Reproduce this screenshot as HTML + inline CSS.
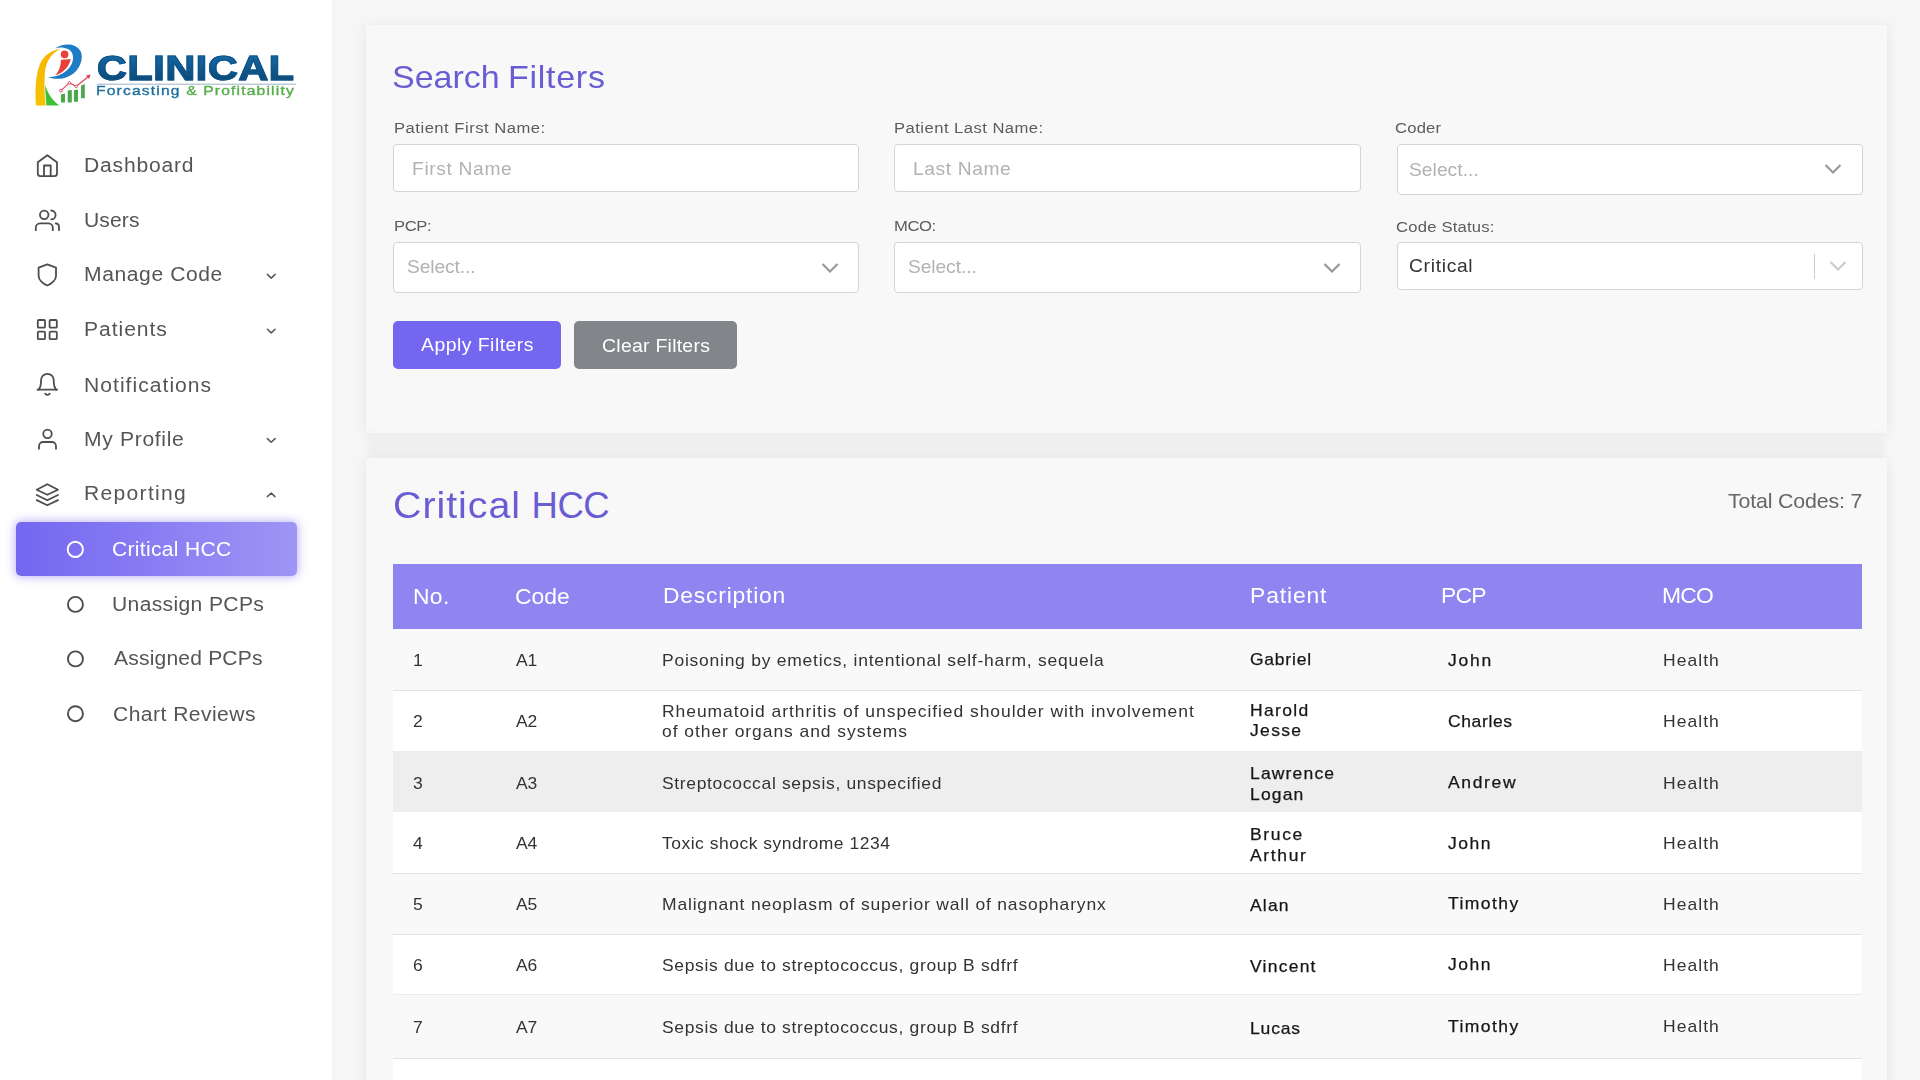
<!DOCTYPE html>
<html><head><meta charset="utf-8">
<style>
*{box-sizing:border-box;margin:0;padding:0}
html,body{width:1920px;height:1080px;overflow:hidden;background:#f6f6f6;font-family:"Liberation Sans",sans-serif}
.abs{position:absolute}
.t{position:absolute;white-space:nowrap;line-height:1.15}
#side{position:absolute;left:0;top:0;width:332px;height:1080px;background:#fff}
.nt{color:#555}
.ic{position:absolute}
.chev{position:absolute}
.circ{position:absolute;border:2px solid #555;border-radius:50%}
.card{position:absolute;background:#f8f8f8;box-shadow:0 2px 12px rgba(0,0,0,0.07)}
.lbl{color:#5c5c5c}
.inp{position:absolute;background:#fff;border:1px solid #d5d5d5;border-radius:4px}
.ph{color:#b2b2b2}
.th{color:#fff}
.row{position:absolute;left:393px;width:1469px}
.td{color:#333}
</style></head><body>
<div id="side">
  <!-- logo -->
  <svg class="abs" style="left:0;top:0" width="332" height="120" viewBox="0 0 332 120">
    <defs>
      <linearGradient id="gy" x1="0" y1="0" x2="0" y2="1"><stop offset="0" stop-color="#f7b500"/><stop offset="1" stop-color="#f5c400"/></linearGradient>
    </defs>
    <path d="M35.9 105.5 C35 90 35.5 75 40 64 C44 55 52 50 60.2 49 C52 53 47 60 45.2 70 C44 80 44.4 95 45.8 105.5 Z" fill="url(#gy)"/>
    <path d="M45 85 C45.5 95 46 100 46.5 105.5 L59.5 105.5 C53 101 48 94 45 85 Z" fill="#3fbf3a"/>
    <path d="M55.4 48.3 C62 43.5 75 42 80.5 51 C84 58 80 68 74 73 C68 78 58 81 47.9 77 C57 77.5 66 73 70.5 66 C74.5 60 74 52 68 49 C64 47 59 47 55.4 48.3 Z" fill="#1e7bc6"/>
    <circle cx="64.6" cy="54.4" r="3.8" fill="#e8403a"/>
    <path d="M60.9 60 C64 59 67.5 59.5 70.8 59.2 C69 67 63 73 55.4 75.3 C59 71 61 66 60.9 60 Z" fill="#e8403a"/>
    <g fill="#4ca64a">
      <path d="M60.9 94.5 L65 93.5 V102.4 H60.9 Z"/>
      <path d="M67.7 90.5 L71.8 90 V102.4 H67.7 Z"/>
      <path d="M73.9 90.3 L78 89.5 V101.7 H73.9 Z"/>
      <path d="M81.1 85.6 L84.8 84 V98.3 H81.1 Z"/>
    </g>
    <path d="M60.9 90.7 L69.4 82.9 L76.3 86.3 L89 76" stroke="#e0405a" stroke-width="1.1" fill="none"/>
    <path d="M86 75.5 L90.5 74.5 L89.2 79 Z" fill="#e0405a"/>
    <g fill="#fff" stroke="#e0405a" stroke-width="0.9"><circle cx="60.9" cy="90.7" r="1.3"/><circle cx="69.4" cy="82.9" r="1.3"/><circle cx="76.3" cy="86.3" r="1.3"/></g>
    <line x1="97" y1="84.2" x2="296" y2="84.2" stroke="#9db3c8" stroke-width="1"/>
  </svg>
  <div class="t" id="logo_t1" style="left:96.90px;top:48.40px;font-size:35.20px;letter-spacing:0.600px;transform:scaleX(1.17);transform-origin:0 0;font-weight:bold;background:linear-gradient(180deg,#176cab 10%,#0a4470 90%);-webkit-background-clip:text;background-clip:text;color:transparent;-webkit-text-stroke:1.2px #0e5587">CLINICAL</div>
  <div class="t" id="logo_t2" style="left:95.70px;top:84.28px;font-size:13.00px;letter-spacing:0.984px;transform:scaleX(1.2);transform-origin:0 0;-webkit-text-stroke:0.35px currentColor"><span style="color:#1d6f9c;-webkit-text-stroke:0.35px #1d6f9c">Forcasting</span> <span style="color:#56ad4a;-webkit-text-stroke:0.35px #56ad4a">&amp; Profitability</span></div>

  <svg class="abs" style="left:0;top:0" width="332" height="1080" viewBox="0 0 332 1080" fill="none" stroke="#4d4d4d" stroke-width="1.8" stroke-linecap="round" stroke-linejoin="round">
    <path d="M47.3 155.2 L57 162.3 V173.6 a2.6 2.6 0 0 1 -2.6 2.6 H40.4 a2.6 2.6 0 0 1 -2.6 -2.6 V162.3 Z"/>
    <path d="M44 176.2 V165.5 H50.7 V176.2"/>
    <circle cx="44.2" cy="214.8" r="4.25"/>
    <path d="M35.8 230.2 V227.6 a4.3 4.3 0 0 1 4.3 -4.3 H48.5 a4.3 4.3 0 0 1 4.3 4.3 V230.2"/>
    <path d="M51.2 210.5 a4.4 4.4 0 0 1 0 8.8"/>
    <path d="M55.7 223.3 a3.4 3.4 0 0 1 3.3 3.4 V230.2"/>
    <path d="M47.3 264.3 L56 267.7 V276 C56 280 51.5 284 47.3 285.5 C43.1 284 38.6 280 38.6 276 V267.7 Z"/>
    <rect x="37.8" y="320" width="7.2" height="7.7" rx="1"/>
    <rect x="49.6" y="320" width="7.2" height="7.7" rx="1"/>
    <rect x="37.8" y="331.6" width="7.2" height="7.6" rx="1"/>
    <rect x="49.6" y="331.6" width="7.2" height="7.6" rx="1"/>
    <path d="M37.5 389.7 H57"/>
    <path d="M38.6 389.7 C40.6 387 41 385 41 383 V380.4 A6.4 6.6 0 0 1 53.8 380.4 V383 C53.8 385 54.3 387 56.1 389.7"/>
    <path d="M45.2 393.7 Q47.4 396.2 49.7 393.7"/>
    <circle cx="47.5" cy="433.8" r="4.25"/>
    <path d="M39 448.8 V446.2 a4.2 4.2 0 0 1 4.2 -4.2 H51.8 a4.2 4.2 0 0 1 4.2 4.2 V448.8"/>
    <path d="M47.3 484.2 L58 489.7 L47.3 494.8 L36.7 489.7 Z"/>
    <path d="M36.7 495 L47.3 500.2 L58 495"/>
    <path d="M36.7 500.1 L47.3 505.3 L58 500.1"/>
    <g stroke-width="1.5" stroke="#555">
      <path d="M267.4 274.4 L271.2 278.1 L275.1 274.4"/>
      <path d="M267.4 329.2 L271.2 332.9 L275.1 329.2"/>
      <path d="M267.4 438.6 L271.2 442.3 L275.1 438.6"/>
      <path d="M267.3 496.6 L271.3 493.0 L274.9 496.6"/>
    </g>
  </svg>
  <div class="t nt" id="nav_dash" style="left:83.92px;top:154.40px;font-size:19.50px;letter-spacing:0.757px;transform:scaleX(1.08);transform-origin:0 0">Dashboard</div>
  <div class="t nt" id="nav_users" style="left:83.92px;top:209.35px;font-size:19.50px;letter-spacing:0.102px;transform:scaleX(1.08);transform-origin:0 0">Users</div>
  <div class="t nt" id="nav_manage" style="left:84.16px;top:263.44px;font-size:19.50px;letter-spacing:0.558px;transform:scaleX(1.08);transform-origin:0 0">Manage Code</div>
  <div class="t nt" id="nav_pat" style="left:84.16px;top:317.92px;font-size:19.50px;letter-spacing:0.896px;transform:scaleX(1.08);transform-origin:0 0">Patients</div>
  <div class="t nt" id="nav_notif" style="left:84.16px;top:373.57px;font-size:19.50px;letter-spacing:0.959px;transform:scaleX(1.08);transform-origin:0 0">Notifications</div>
  <div class="t nt" id="nav_prof" style="left:84.16px;top:427.77px;font-size:19.50px;letter-spacing:0.635px;transform:scaleX(1.08);transform-origin:0 0">My Profile</div>
  <div class="t nt" id="nav_rep" style="left:84.16px;top:482.05px;font-size:19.50px;letter-spacing:1.207px;transform:scaleX(1.08);transform-origin:0 0">Reporting</div>

  <div class="abs" style="left:16px;top:522px;width:281px;height:54px;border-radius:5px;background:linear-gradient(90deg,#7367f0,#9e95f5);box-shadow:0 0 10px 1px rgba(115,103,240,0.5)"></div>
  <svg class="abs" style="left:0;top:0" width="332" height="1080" viewBox="0 0 332 1080" fill="none" stroke-width="1.9">
    <circle cx="75.3" cy="549.4" r="7.6" stroke="#fff"/>
    <circle cx="75.45" cy="604.4" r="7.5" stroke="#4d4d4d"/>
    <circle cx="75.45" cy="658.9" r="7.5" stroke="#4d4d4d"/>
    <circle cx="75.45" cy="713.7" r="7.5" stroke="#4d4d4d"/>
  </svg>
  <div class="t nt" id="sub_crit" style="left:112.18px;top:538.33px;font-size:19.50px;letter-spacing:0.284px;transform:scaleX(1.08);transform-origin:0 0;color:#fff">Critical HCC</div>
  <div class="t nt" id="sub_un" style="left:112.20px;top:592.67px;font-size:19.50px;letter-spacing:0.335px;transform:scaleX(1.08);transform-origin:0 0">Unassign PCPs</div>
  <div class="t nt" id="sub_as" style="left:113.52px;top:647.34px;font-size:19.50px;letter-spacing:0.169px;transform:scaleX(1.08);transform-origin:0 0">Assigned PCPs</div>
  <div class="t nt" id="sub_ch" style="left:112.72px;top:702.71px;font-size:19.50px;letter-spacing:0.429px;transform:scaleX(1.08);transform-origin:0 0">Chart Reviews</div>
</div>

<!-- card 1 -->
<div class="card" style="left:366px;top:25px;width:1521px;height:408px"></div>
<div class="t" id="title_sf1" style="left:391.92px;top:59.33px;font-size:31.50px;letter-spacing:-0.028px;transform:scaleX(1.08);transform-origin:0 0;color:#6a5dd3">Search</div><div class="t" id="title_sf2" style="left:507.80px;top:59.33px;font-size:31.50px;letter-spacing:0.662px;transform:scaleX(1.08);transform-origin:0 0;color:#6a5dd3">Filters</div>

<div class="t lbl" id="lbl1" style="left:393.72px;top:118.62px;font-size:15.40px;letter-spacing:0.460px;transform:scaleX(1.08);transform-origin:0 0">Patient First Name:</div>
<div class="inp" style="left:393px;top:144px;width:466px;height:48px"></div>
<div class="t ph" id="ph1" style="left:411.68px;top:158.94px;font-size:17.80px;letter-spacing:0.603px;transform:scaleX(1.08);transform-origin:0 0">First Name</div>

<div class="t lbl" id="lbl2" style="left:894.44px;top:118.62px;font-size:15.40px;letter-spacing:0.426px;transform:scaleX(1.08);transform-origin:0 0">Patient Last Name:</div>
<div class="inp" style="left:894px;top:144px;width:467px;height:48px"></div>
<div class="t ph" id="ph2" style="left:913.20px;top:159.18px;font-size:17.80px;letter-spacing:0.562px;transform:scaleX(1.08);transform-origin:0 0">Last Name</div>

<div class="t lbl" id="lbl3" style="left:1395.46px;top:118.54px;font-size:15.40px;letter-spacing:0.182px;transform:scaleX(1.08);transform-origin:0 0">Coder</div>
<div class="inp" style="left:1397px;top:144px;width:466px;height:51px"></div>
<div class="t ph" id="ph3" style="left:1409.44px;top:160.02px;font-size:17.80px;letter-spacing:0.042px;transform:scaleX(1.08);transform-origin:0 0">Select...</div>
<svg class="abs" style="left:1824px;top:163px" width="18" height="12" viewBox="0 0 18 12" fill="none" stroke="#999" stroke-width="2.2"><path d="M1.5 2 L9 9.5 L16.5 2"/></svg>

<div class="t lbl" id="lbl4" style="left:393.68px;top:217.25px;font-size:15.40px;letter-spacing:-0.384px;transform:scaleX(1.08);transform-origin:0 0">PCP:</div>
<div class="inp" style="left:393px;top:242px;width:466px;height:51px"></div>
<div class="t ph" id="ph4" style="left:407.22px;top:257.46px;font-size:17.80px;letter-spacing:-0.103px;transform:scaleX(1.08);transform-origin:0 0">Select...</div>
<svg class="abs" style="left:820.5px;top:262px" width="18" height="12" viewBox="0 0 18 12" fill="none" stroke="#999" stroke-width="2.2"><path d="M1.5 2 L9 9.5 L16.5 2"/></svg>

<div class="t lbl" id="lbl5" style="left:894.44px;top:217.34px;font-size:15.40px;letter-spacing:-0.384px;transform:scaleX(1.08);transform-origin:0 0">MCO:</div>
<div class="inp" style="left:894px;top:242px;width:467px;height:51px"></div>
<div class="t ph" id="ph5" style="left:907.94px;top:257.46px;font-size:17.80px;letter-spacing:-0.073px;transform:scaleX(1.08);transform-origin:0 0">Select...</div>
<svg class="abs" style="left:1322.5px;top:262px" width="18" height="12" viewBox="0 0 18 12" fill="none" stroke="#999" stroke-width="2.2"><path d="M1.5 2 L9 9.5 L16.5 2"/></svg>

<div class="t lbl" id="lbl6" style="left:1395.98px;top:217.80px;font-size:15.40px;letter-spacing:0.199px;transform:scaleX(1.08);transform-origin:0 0">Code Status:</div>
<div class="inp" style="left:1397px;top:242px;width:466px;height:48px"></div>
<div class="t" id="val6" style="left:1409.44px;top:255.90px;font-size:17.80px;letter-spacing:0.651px;transform:scaleX(1.08);transform-origin:0 0;color:#333">Critical</div>
<div class="abs" style="left:1814px;top:254px;width:1px;height:25px;background:#ccc"></div>
<svg class="abs" style="left:1829px;top:260px" width="18" height="12" viewBox="0 0 18 12" fill="none" stroke="#ccc" stroke-width="2.2"><path d="M1.5 2 L9 9.5 L16.5 2"/></svg>

<div class="abs" style="left:393px;top:321px;width:168px;height:48px;background:#7367f0;border-radius:5px"></div>
<div class="abs" style="left:574px;top:321px;width:163px;height:48px;background:#82868b;border-radius:5px"></div>
<div class="t" id="btn1t" style="left:421.48px;top:335.37px;font-size:18.00px;letter-spacing:0.425px;transform:scaleX(1.08);transform-origin:0 0;color:#fff">Apply Filters</div>
<div class="t" id="btn2t" style="left:601.70px;top:335.57px;font-size:18.00px;letter-spacing:0.241px;transform:scaleX(1.08);transform-origin:0 0;color:#fff">Clear Filters</div>

<div class="abs" style="left:368px;top:433px;width:1516px;height:24px;background:#efefef;filter:blur(2px)"></div>
<!-- card 2 -->
<div class="card" style="left:366px;top:458px;width:1521px;height:640px"></div>
<div class="t" id="title_ch1" style="left:392.75px;top:485.14px;font-size:36.50px;letter-spacing:0.870px;transform:scaleX(1.08);transform-origin:0 0;color:#6a5dd3">Critical</div><div class="t" id="title_ch2" style="left:531.60px;top:484.98px;font-size:36.50px;letter-spacing:-0.500px;transform:scaleX(1.0);transform-origin:0 0;color:#6a5dd3">HCC</div>
<div class="t" id="total" style="left:1728.22px;top:489.63px;font-size:19.80px;letter-spacing:-0.151px;transform:scaleX(1.08);transform-origin:0 0;color:#666">Total Codes: 7</div>

<div class="abs" style="left:393px;top:564px;width:1469px;height:65px;background:#8f85f0"></div>
<div class="t th" id="th1" style="left:413.16px;top:584.70px;font-size:21.20px;letter-spacing:0.307px;transform:scaleX(1.08);transform-origin:0 0">No.</div>
<div class="t th" id="th2" style="left:515.42px;top:584.57px;font-size:21.20px;letter-spacing:0.001px;transform:scaleX(1.08);transform-origin:0 0">Code</div>
<div class="t th" id="th3" style="left:662.88px;top:584.25px;font-size:21.20px;letter-spacing:0.727px;transform:scaleX(1.08);transform-origin:0 0">Description</div>
<div class="t th" id="th4" style="left:1250.40px;top:584.40px;font-size:21.20px;letter-spacing:0.801px;transform:scaleX(1.08);transform-origin:0 0">Patient</div>
<div class="t th" id="th5" style="left:1441.40px;top:584.22px;font-size:21.20px;letter-spacing:-0.733px;transform:scaleX(1.08);transform-origin:0 0">PCP</div>
<div class="t th" id="th6" style="left:1661.75px;top:584.27px;font-size:21.20px;letter-spacing:-0.733px;transform:scaleX(1.08);transform-origin:0 0">MCO</div>

<div class="row" style="top:629px;height:62px;background:#f9f9f9;border-bottom:1px solid #e2e2e2"></div>
<div class="row" style="top:691px;height:61px;background:#fff;border-bottom:1px solid #ededed"></div>
<div class="row" style="top:752px;height:60px;background:#eeeeee"></div>
<div class="row" style="top:812px;height:62px;background:#fff;border-bottom:1px solid #e2e2e2"></div>
<div class="row" style="top:874px;height:61px;background:#f9f9f9;border-bottom:1px solid #e2e2e2"></div>
<div class="row" style="top:935px;height:60px;background:#fff;border-bottom:1px solid #ededed"></div>
<div class="row" style="top:995px;height:64px;background:#f9f9f9;border-bottom:1px solid #e2e2e2"></div>
<div class="row" style="top:1059px;height:30px;background:#fff"></div>

<div class="t td" id="r1desc" style="left:662.20px;top:649.76px;font-size:16.20px;letter-spacing:0.700px;transform:scaleX(1.08);transform-origin:0 0;line-height:20.4px">Poisoning by emetics, intentional self-harm, sequela</div>
<div class="t td" id="cell_r0c0" style="left:413.20px;top:649.94px;font-size:16.20px;letter-spacing:0.700px;line-height:20.4px;transform:scaleX(1.08);transform-origin:0 0;">1</div>
<div class="t td" id="cell_r0c1" style="left:516.45px;top:649.94px;font-size:16.20px;letter-spacing:-0.100px;line-height:20.4px;transform:scaleX(1.08);transform-origin:0 0;">A1</div>
<div class="t td" id="cell_r0c3" style="left:1250.10px;top:649.44px;font-size:16.20px;letter-spacing:0.719px;line-height:20.4px;transform:scaleX(1.08);transform-origin:0 0;color:#161616;-webkit-text-stroke:0.25px #161616">Gabriel</div>
<div class="t td" id="cell_r0c4" style="left:1447.80px;top:649.94px;font-size:16.20px;letter-spacing:1.619px;line-height:20.4px;transform:scaleX(1.08);transform-origin:0 0;color:#161616;-webkit-text-stroke:0.25px #161616">John</div>
<div class="t td" id="cell_r0c5" style="left:1662.95px;top:649.94px;font-size:16.20px;letter-spacing:0.966px;line-height:20.4px;transform:scaleX(1.08);transform-origin:0 0;">Health</div>
<div class="t td" id="cell_r1c0" style="left:413.20px;top:710.94px;font-size:16.20px;letter-spacing:0.700px;line-height:20.4px;transform:scaleX(1.08);transform-origin:0 0;">2</div>
<div class="t td" id="cell_r1c1" style="left:516.45px;top:710.94px;font-size:16.20px;letter-spacing:-0.100px;line-height:20.4px;transform:scaleX(1.08);transform-origin:0 0;">A2</div>
<div class="t td" id="cell_r1c2" style="left:662.20px;top:700.74px;font-size:16.20px;letter-spacing:0.873px;line-height:20.4px;transform:scaleX(1.08);transform-origin:0 0;">Rheumatoid arthritis of unspecified shoulder with involvement<br>of other organs and systems</div>
<div class="t td" id="cell_r1c3" style="left:1250.10px;top:699.94px;font-size:16.20px;letter-spacing:1.246px;line-height:20.4px;transform:scaleX(1.08);transform-origin:0 0;color:#161616;-webkit-text-stroke:0.25px #161616">Harold<br>Jesse</div>
<div class="t td" id="cell_r1c4" style="left:1447.80px;top:710.94px;font-size:16.20px;letter-spacing:0.586px;line-height:20.4px;transform:scaleX(1.08);transform-origin:0 0;color:#161616;-webkit-text-stroke:0.25px #161616">Charles</div>
<div class="t td" id="cell_r1c5" style="left:1662.95px;top:710.94px;font-size:16.20px;letter-spacing:0.966px;line-height:20.4px;transform:scaleX(1.08);transform-origin:0 0;">Health</div>
<div class="t td" id="cell_r2c0" style="left:413.20px;top:772.69px;font-size:16.20px;letter-spacing:0.700px;line-height:20.4px;transform:scaleX(1.08);transform-origin:0 0;">3</div>
<div class="t td" id="cell_r2c1" style="left:516.45px;top:772.69px;font-size:16.20px;letter-spacing:-0.100px;line-height:20.4px;transform:scaleX(1.08);transform-origin:0 0;">A3</div>
<div class="t td" id="cell_r2c2" style="left:662.20px;top:772.69px;font-size:16.20px;letter-spacing:0.605px;line-height:20.4px;transform:scaleX(1.08);transform-origin:0 0;">Streptococcal sepsis, unspecified</div>
<div class="t td" id="cell_r2c3" style="left:1250.10px;top:763.38px;font-size:16.20px;letter-spacing:1.086px;line-height:20.4px;transform:scaleX(1.08);transform-origin:0 0;color:#161616;-webkit-text-stroke:0.25px #161616">Lawrence<br>Logan</div>
<div class="t td" id="cell_r2c4" style="left:1447.80px;top:771.79px;font-size:16.20px;letter-spacing:1.526px;line-height:20.4px;transform:scaleX(1.08);transform-origin:0 0;color:#161616;-webkit-text-stroke:0.25px #161616">Andrew</div>
<div class="t td" id="cell_r2c5" style="left:1662.95px;top:772.69px;font-size:16.20px;letter-spacing:0.966px;line-height:20.4px;transform:scaleX(1.08);transform-origin:0 0;">Health</div>
<div class="t td" id="cell_r3c0" style="left:413.20px;top:833.49px;font-size:16.20px;letter-spacing:0.700px;line-height:20.4px;transform:scaleX(1.08);transform-origin:0 0;">4</div>
<div class="t td" id="cell_r3c1" style="left:516.45px;top:833.49px;font-size:16.20px;letter-spacing:-0.100px;line-height:20.4px;transform:scaleX(1.08);transform-origin:0 0;">A4</div>
<div class="t td" id="cell_r3c2" style="left:662.20px;top:833.49px;font-size:16.20px;letter-spacing:0.469px;line-height:20.4px;transform:scaleX(1.08);transform-origin:0 0;">Toxic shock syndrome 1234</div>
<div class="t td" id="cell_r3c3" style="left:1250.10px;top:824.18px;font-size:16.20px;letter-spacing:1.526px;line-height:20.4px;transform:scaleX(1.08);transform-origin:0 0;color:#161616;-webkit-text-stroke:0.25px #161616">Bruce<br>Arthur</div>
<div class="t td" id="cell_r3c4" style="left:1447.80px;top:832.59px;font-size:16.20px;letter-spacing:1.419px;line-height:20.4px;transform:scaleX(1.08);transform-origin:0 0;color:#161616;-webkit-text-stroke:0.25px #161616">John</div>
<div class="t td" id="cell_r3c5" style="left:1662.95px;top:833.49px;font-size:16.20px;letter-spacing:0.966px;line-height:20.4px;transform:scaleX(1.08);transform-origin:0 0;">Health</div>
<div class="t td" id="cell_r4c0" style="left:413.20px;top:893.89px;font-size:16.20px;letter-spacing:0.700px;line-height:20.4px;transform:scaleX(1.08);transform-origin:0 0;">5</div>
<div class="t td" id="cell_r4c1" style="left:516.45px;top:893.89px;font-size:16.20px;letter-spacing:-0.100px;line-height:20.4px;transform:scaleX(1.08);transform-origin:0 0;">A5</div>
<div class="t td" id="cell_r4c2" style="left:662.20px;top:893.89px;font-size:16.20px;letter-spacing:0.763px;line-height:20.4px;transform:scaleX(1.08);transform-origin:0 0;">Malignant neoplasm of superior wall of nasopharynx</div>
<div class="t td" id="cell_r4c3" style="left:1250.10px;top:894.79px;font-size:16.20px;letter-spacing:1.086px;line-height:20.4px;transform:scaleX(1.08);transform-origin:0 0;color:#161616;-webkit-text-stroke:0.25px #161616">Alan</div>
<div class="t td" id="cell_r4c4" style="left:1447.80px;top:892.99px;font-size:16.20px;letter-spacing:1.353px;line-height:20.4px;transform:scaleX(1.08);transform-origin:0 0;color:#161616;-webkit-text-stroke:0.25px #161616">Timothy</div>
<div class="t td" id="cell_r4c5" style="left:1662.95px;top:893.89px;font-size:16.20px;letter-spacing:0.966px;line-height:20.4px;transform:scaleX(1.08);transform-origin:0 0;">Health</div>
<div class="t td" id="cell_r5c0" style="left:413.20px;top:955.19px;font-size:16.20px;letter-spacing:0.700px;line-height:20.4px;transform:scaleX(1.08);transform-origin:0 0;">6</div>
<div class="t td" id="cell_r5c1" style="left:516.45px;top:955.19px;font-size:16.20px;letter-spacing:-0.100px;line-height:20.4px;transform:scaleX(1.08);transform-origin:0 0;">A6</div>
<div class="t td" id="cell_r5c2" style="left:662.20px;top:955.19px;font-size:16.20px;letter-spacing:0.613px;line-height:20.4px;transform:scaleX(1.08);transform-origin:0 0;">Sepsis due to streptococcus, group B sdfrf</div>
<div class="t td" id="cell_r5c3" style="left:1250.10px;top:956.09px;font-size:16.20px;letter-spacing:1.153px;line-height:20.4px;transform:scaleX(1.08);transform-origin:0 0;color:#161616;-webkit-text-stroke:0.25px #161616">Vincent</div>
<div class="t td" id="cell_r5c4" style="left:1447.80px;top:954.29px;font-size:16.20px;letter-spacing:1.419px;line-height:20.4px;transform:scaleX(1.08);transform-origin:0 0;color:#161616;-webkit-text-stroke:0.25px #161616">John</div>
<div class="t td" id="cell_r5c5" style="left:1662.95px;top:954.69px;font-size:16.20px;letter-spacing:0.966px;line-height:20.4px;transform:scaleX(1.08);transform-origin:0 0;">Health</div>
<div class="t td" id="cell_r6c0" style="left:413.20px;top:1017.39px;font-size:16.20px;letter-spacing:0.700px;line-height:20.4px;transform:scaleX(1.08);transform-origin:0 0;">7</div>
<div class="t td" id="cell_r6c1" style="left:516.45px;top:1017.39px;font-size:16.20px;letter-spacing:-0.100px;line-height:20.4px;transform:scaleX(1.08);transform-origin:0 0;">A7</div>
<div class="t td" id="cell_r6c2" style="left:662.20px;top:1017.39px;font-size:16.20px;letter-spacing:0.613px;line-height:20.4px;transform:scaleX(1.08);transform-origin:0 0;">Sepsis due to streptococcus, group B sdfrf</div>
<div class="t td" id="cell_r6c3" style="left:1250.10px;top:1018.29px;font-size:16.20px;letter-spacing:0.786px;line-height:20.4px;transform:scaleX(1.08);transform-origin:0 0;color:#161616;-webkit-text-stroke:0.25px #161616">Lucas</div>
<div class="t td" id="cell_r6c4" style="left:1447.80px;top:1016.49px;font-size:16.20px;letter-spacing:1.353px;line-height:20.4px;transform:scaleX(1.08);transform-origin:0 0;color:#161616;-webkit-text-stroke:0.25px #161616">Timothy</div>
<div class="t td" id="cell_r6c5" style="left:1662.95px;top:1016.19px;font-size:16.20px;letter-spacing:0.966px;line-height:20.4px;transform:scaleX(1.08);transform-origin:0 0;">Health</div>
</body></html>
